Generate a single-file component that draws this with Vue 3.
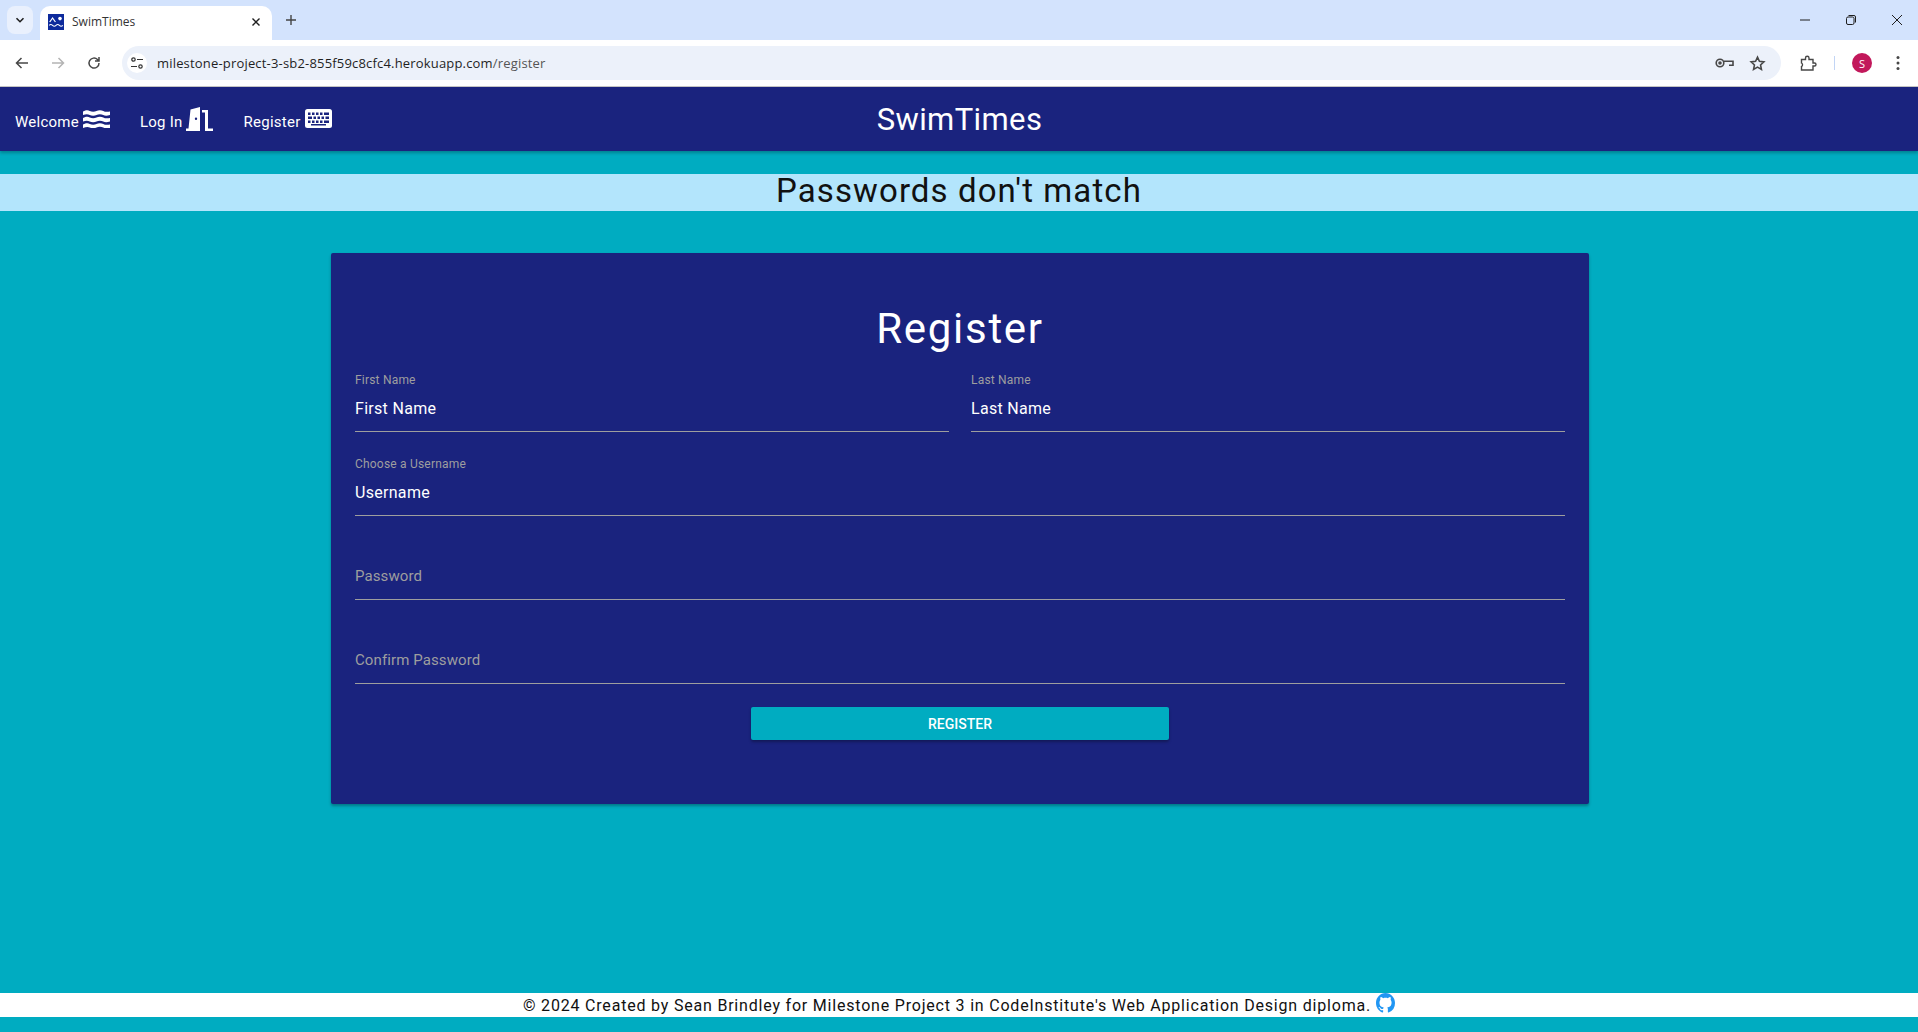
<template>
  <div class="page">
    <!-- browser chrome -->
    <div class="tabstrip">
      <button class="tab-search" type="button">
        <svg width="12" height="12" viewBox="0 0 12 12"><path d="M2.500 4.200 6 7.700l3.500-3.500" fill="none" stroke="#1f1f1f" stroke-width="1.600" /></svg>
      </button>
      <div class="tab">
        <svg class="favicon" width="16" height="16" viewBox="0 0 14 14">
          <rect width="14" height="14" fill="#0d2a9c" />
          <path d="M1.500 7 4 3.500 6.500 7" fill="none" stroke="#fff" stroke-width="1.100" />
          <circle cx="10.500" cy="4" r="1.600" fill="#fff" />
          <path d="M1 10c1-1 2-1 3 0s2 1 3 0 2-1 3 0 2 1 3 0" fill="none" stroke="#fff" stroke-width=".9" />
        </svg>
        <span class="tab-title">SwimTimes</span>
        <svg width="10" height="10" viewBox="0 0 10 10"><path d="M1.500 1.500l7 7m0-7-7 7" stroke="#1f1f1f" stroke-width="1.400" /></svg>
      </div>
      <svg class="new-tab" width="12" height="12" viewBox="0 0 12 12"><path d="M6 1v10M1 6h10" stroke="#444" stroke-width="1.400" /></svg>
      <div class="window-btns">
        <svg width="12" height="12" viewBox="0 0 12 12"><path d="M1 6h10" stroke="#1f1f1f" stroke-width="1" /></svg>
        <svg width="12" height="12" viewBox="0 0 12 12"><rect x="1.500" y="3" width="7.500" height="7.500" rx="1.500" fill="none" stroke="#1f1f1f" /><path d="M3.500 1.500h5.500a1.500 1.500 0 0 1 1.500 1.500v5.500" fill="none" stroke="#1f1f1f" /></svg>
        <svg width="12" height="12" viewBox="0 0 12 12"><path d="M1 1l10 10M11 1 1 11" stroke="#1f1f1f" stroke-width="1" /></svg>
      </div>
    </div>
    <div class="toolbar">
      <svg width="16" height="16" viewBox="0 0 16 16"><path d="M14 8H3M7.500 3 2.500 8l5 5" fill="none" stroke="#474747" stroke-width="1.500" /></svg>
      <svg class="tb-forward" width="16" height="16" viewBox="0 0 16 16"><path d="M2 8h11M8.500 3l5 5-5 5" fill="none" stroke="#b4b4b4" stroke-width="1.500" /></svg>
      <svg class="tb-reload" width="16" height="16" viewBox="0 0 16 16"><path d="M13 8a5 5 0 1 1-1.500-3.500L13 6M13 2v4H9" fill="none" stroke="#474747" stroke-width="1.500" /></svg>
      <div class="omnibox">
        <span class="site-info">
          <svg width="14" height="14" viewBox="0 0 14 14" fill="none" stroke="#333" stroke-width="1.200"><circle cx="3.500" cy="3.500" r="1.700" /><path d="M7 3.500h6M1 10.500h6" /><circle cx="10.500" cy="10.500" r="1.700" /></svg>
        </span>
        <span class="url">milestone-project-3-sb2-855f59c8cfc4.herokuapp.com<span class="url-path">/register</span></span>
        <svg class="omni-key" width="19" height="14" viewBox="0 0 19 14" fill="none" stroke="#474747" stroke-width="1.600"><circle cx="5" cy="7" r="3.800" /><path d="M9 5.200h9v4h-4" /><circle cx="5" cy="7" r="1" fill="#474747" /></svg>
        <svg width="17" height="17" viewBox="0 0 24 24" fill="none" stroke="#474747" stroke-width="2.200"><path d="m12 3 2.700 6 6.300.7-4.700 4.300 1.300 6.500L12 17.200 6.400 20.500 7.700 14 3 9.700 9.300 9z" /></svg>
      </div>
      <svg class="tb-ext" width="17" height="17" viewBox="0 0 17 17"><path d="M1.500 4.500h4V3a1.700 1.700 0 0 1 3.500 0v1.500h4v3.500h1.500a1.500 1.500 0 0 1 0 3H13v4H1.500v-3.500a2 2 0 0 0 0-3.500z" fill="none" stroke="#474747" stroke-width="1.400" /></svg>
      <span class="tb-sep"></span>
      <span class="avatar">S</span>
      <svg class="tb-menu" width="4" height="16" viewBox="0 0 4 16" fill="#474747"><circle cx="2" cy="2.500" r="1.500" /><circle cx="2" cy="8" r="1.500" /><circle cx="2" cy="13.500" r="1.500" /></svg>
    </div>

    <!-- site -->
    <header class="navbar">
      <nav class="nav-links">
        <a>Welcome
          <svg width="27" height="18" viewBox="0 0 27 18" fill="#fff"><path d="M0 1.500C3 0 5 0 6.750 1s5 1 6.750 0 5-1 6.750 0 4 1 6.750.5V5c-3 1-5 1-6.750 0s-5-1-6.750 0-5 1-6.750 0-4-1-6.750 0zM0 8c3-1.500 5-1.500 6.750-.5s5 1 6.750 0 5-1 6.750 0 4 1 6.750.5v3.500c-3 1-5 1-6.750 0s-5-1-6.750 0-5 1-6.750 0-4-1-6.750 0zM0 14.500c3-1.500 5-1.500 6.750-.5s5 1 6.750 0 5-1 6.750 0 4 1 6.750.5V18c-3 .5-5 .5-6.750-.5s-5-1-6.750 0-5 1-6.750 0-4-.5-6.750.500z" /></svg>
        </a>
        <a>Log In
          <svg class="door" width="27" height="24" viewBox="0 0 27 24" fill="#fff"><path d="M0 24v-2.500h2.500L4.500 2.500 14 0v24zM10 10.500a1.200 1.200 0 1 0 0 2.400 1.200 1.200 0 0 0 0-2.400z" fill-rule="evenodd" /><path d="M16 3h6v18.500h5V24h-8V5.500h-3z" /></svg>
        </a>
        <a>Register
          <svg width="27" height="19" viewBox="0 0 27 19"><rect width="27" height="19" rx="2.500" fill="#fff" /><path d="M3 3.500h2.500V6H3zM7 3.500h2.500V6H7zM11 3.500h2.500V6H11zM15 3.500h2.500V6H15zM19 3.500h5V6h-5zM3 7.500h4V10H3zM8.500 7.500H11V10H8.500zM12.500 7.500H15V10h-2.500zM16.500 7.500H19V10h-2.500zM20.500 7.500H24V10h-3.500zM3 11.500h2.500V14H3zM7 11.500h2.500V14H7zM11 11.500h2.500V14H11zM15 11.500h2.500V14H15zM19 11.500h5V14h-5zM6 15h15v1.500H6z" fill="#1a237e" /></svg>
        </a>
      </nav>
      <div class="brand">SwimTimes</div>
    </header>

    <div class="flash">Passwords don't match</div>

    <main class="card">
      <h2 class="card-title">Register</h2>
      <div class="row">
        <div class="field">
          <label>First Name</label>
          <div class="value">First Name</div>
        </div>
        <div class="field">
          <label>Last Name</label>
          <div class="value">Last Name</div>
        </div>
      </div>
      <div class="field">
        <label>Choose a Username</label>
        <div class="value">Username</div>
      </div>
      <div class="field">
        <label></label>
        <div class="value placeholder">Password</div>
      </div>
      <div class="field">
        <label></label>
        <div class="value placeholder">Confirm Password</div>
      </div>
      <button class="submit" type="button">REGISTER</button>
    </main>

    <footer class="footer">
      <span>© 2024 Created by Sean Brindley for Milestone Project 3 in CodeInstitute's Web Application Design diploma.</span>
      <svg class="gh" width="19" height="20" viewBox="0 0 16 16" preserveAspectRatio="none" fill="#2196f3"><path d="M8 0C3.580 0 0 3.580 0 8c0 3.540 2.290 6.530 5.470 7.590.4.070.55-.17.55-.38 0-.19-.01-.82-.01-1.490-2.010.37-2.530-.49-2.690-.94-.09-.23-.48-.94-.82-1.130-.28-.15-.68-.52-.01-.53.63-.01 1.080.58 1.230.82.720 1.210 1.870.87 2.330.66.070-.52.28-.87.510-1.070-1.780-.2-3.640-.89-3.640-3.950 0-.87.31-1.590.82-2.150-.08-.2-.36-1.020.08-2.120 0 0 .67-.21 2.200.82.640-.18 1.320-.27 2-.27.680 0 1.360.09 2 .27 1.530-1.040 2.200-.82 2.200-.82.44 1.100.16 1.920.08 2.120.51.56.82 1.270.82 2.150 0 3.070-1.870 3.750-3.650 3.950.29.25.54.730.54 1.480 0 1.070-.01 1.930-.01 2.200 0 .21.15.46.55.38A8.013 8.013 0 0 0 16 8c0-4.420-3.580-8-8-8z" /></svg>
    </footer>
  </div>
</template>

<script setup>
</script>

<style>
html,
body {
  margin: 0;
  overflow: hidden;
}
</style>

<style scoped>
.page {
  height: 1032px;
  display: flex;
  flex-direction: column;
  background: #00acc1;
  font-family: Roboto, "Liberation Sans", sans-serif;
  overflow: hidden;
}

.tabstrip {
  height: 40px;
  flex: none;
  display: flex;
  align-items: flex-end;
  background: #d3e3fd;
  font-family: "Open Sans", "Liberation Sans", sans-serif;
}

.tab-search {
  width: 26px;
  height: 28px;
  margin: 0 7px 6px 7px;
  padding: 0;
  border: 0;
  border-radius: 8px;
  background: #e9f0fd;
  display: flex;
  align-items: center;
  justify-content: center;
}

.tab {
  width: 232px;
  height: 34px;
  padding: 0 11px 3px 8px;
  box-sizing: border-box;
  background: #fff;
  border-radius: 10px 10px 0 0;
  display: flex;
  align-items: center;
  gap: 8px;
  font-size: 12px;
  color: #333;
}

.tab-title {
  flex: 1;
}

.new-tab {
  margin: 0 0 14px 13px;
}

.window-btns {
  margin: 0 0 14px auto;
  display: flex;
  gap: 34px;
  padding-right: 15px;
}

.toolbar {
  height: 47px;
  flex: none;
  box-sizing: border-box;
  border-bottom: 1px solid #c7c7c7;
  display: flex;
  align-items: center;
  padding-left: 14px;
  background: #fff;
  font-family: "Open Sans", "Liberation Sans", sans-serif;
}

.tb-forward,
.tb-reload {
  margin-left: 20px;
}

.omnibox {
  width: 1659px;
  height: 34px;
  margin-left: 20px;
  padding: 0 15px 0 5px;
  box-sizing: border-box;
  border-radius: 17px;
  background: #ecf1fa;
  display: flex;
  align-items: center;
}

.site-info {
  width: 20px;
  height: 20px;
  border-radius: 50%;
  background: #fff;
  display: flex;
  align-items: center;
  justify-content: center;
}

.url {
  flex: 1;
  margin-left: 10px;
  font-size: 13px;
  letter-spacing: 0.18px;
  color: #1f1f1f;
}

.url-path {
  color: #555;
}

.omni-key {
  margin-right: 15px;
}

.tb-ext {
  margin-left: 19px;
}

.tb-sep {
  width: 1px;
  height: 14px;
  margin-left: 17px;
  background: #c2d5f5;
}

.avatar {
  width: 20px;
  height: 20px;
  margin-left: 17px;
  border-radius: 50%;
  background: #c2185b;
  color: #fff;
  font-size: 11px;
  display: flex;
  align-items: center;
  justify-content: center;
}

.tb-menu {
  margin-left: 24px;
}

.navbar {
  height: 64px;
  flex: none;
  position: relative;
  display: flex;
  align-items: center;
  justify-content: center;
  background: #1a237e;
  color: #fff;
  box-shadow: 0 2px 3px rgba(0, 0, 0, 0.25);
}

.nav-links {
  position: absolute;
  left: 15px;
  top: 0;
  bottom: 0;
  display: flex;
  align-items: center;
  gap: 30px;
}

.nav-links a {
  display: flex;
  align-items: center;
  gap: 4px;
  font-size: 15px;
  line-height: 22px;
  letter-spacing: 0.25px;
  padding-top: 6px;
}

.nav-links svg {
  margin-top: -7px;
}

.nav-links .door {
  margin-left: -1px;
  margin-right: 1px;
}

.brand {
  margin-left: 1px;
  font-size: 31px;
  letter-spacing: 0.4px;
}

.flash {
  height: 37px;
  margin-top: 23px;
  flex: none;
  background: #b3e5fc;
  color: #111;
  text-align: center;
  font-size: 33px;
  line-height: 33px;
  letter-spacing: 1.1px;
}

.card {
  width: 1258px;
  height: 551px;
  margin: 42px 0 0 331px;
  padding: 0 24px;
  box-sizing: border-box;
  flex: none;
  background: #1a237e;
  border-radius: 2px;
  box-shadow: 0 2px 3px rgba(0, 0, 0, 0.3);
  display: flex;
  flex-direction: column;
}

.card-title {
  margin: 51px 0 16px;
  height: 50px;
  color: #fff;
  text-align: center;
  font-size: 42px;
  font-weight: 400;
  line-height: 50px;
  letter-spacing: 1.7px;
}

.row {
  display: flex;
  gap: 22px;
}

.row .field {
  flex: 1;
}

.field {
  height: 61px;
  margin-bottom: 22px;
  border-bottom: 1px solid #9e9e9e;
  display: flex;
  flex-direction: column;
}

.field label {
  height: 16px;
  margin-top: 2px;
  font-size: 12px;
  line-height: 16px;
  letter-spacing: 0.2px;
  color: #9e9e9e;
}

.value {
  margin-top: 10px;
  font-size: 16px;
  line-height: 22px;
  letter-spacing: 0.3px;
  color: #fff;
}

.placeholder {
  margin-top: 9px;
  font-size: 15px;
  letter-spacing: 0.1px;
  color: #9e9e9e;
}

.submit {
  width: 418px;
  height: 33px;
  margin: 1px auto 0;
  padding: 0;
  border: 0;
  border-radius: 2px;
  background: #00acc1;
  color: #fff;
  font-family: inherit;
  font-size: 14px;
  font-weight: 500;
  box-shadow: 0 2px 3px rgba(0, 0, 0, 0.3);
}

.footer {
  height: 24px;
  margin-top: auto;
  margin-bottom: 15px;
  flex: none;
  background: #fff;
  color: #111;
  display: flex;
  align-items: center;
  justify-content: center;
  gap: 5px;
  font-size: 16px;
  letter-spacing: 0.8px;
}

.gh {
  margin-top: -4px;
}
</style>
